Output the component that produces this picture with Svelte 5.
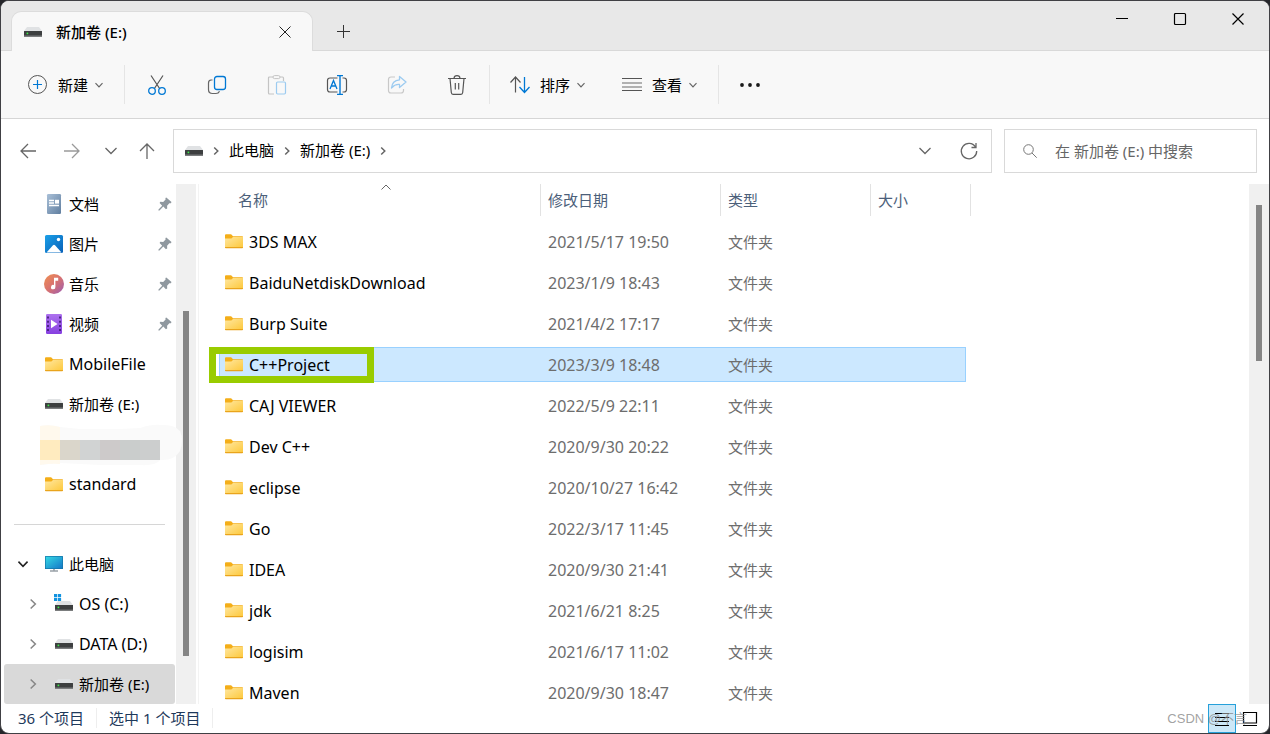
<script lang="ts">
  type Folder = { name: string; modified: string };
  type Place = { label: string; icon: string; level?: number; pinned?: boolean; open?: boolean; latin?: boolean };

  const folders: Folder[] = [
    { name: '3DS MAX', modified: '2021/5/17 19:50' },
    { name: 'BaiduNetdiskDownload', modified: '2023/1/9 18:43' },
    { name: 'Burp Suite', modified: '2021/4/2 17:17' },
    { name: 'C++Project', modified: '2023/3/9 18:48' },
    { name: 'CAJ VIEWER', modified: '2022/5/9 22:11' },
    { name: 'Dev C++', modified: '2020/9/30 20:22' },
    { name: 'eclipse', modified: '2020/10/27 16:42' },
    { name: 'Go', modified: '2022/3/17 11:45' },
    { name: 'IDEA', modified: '2020/9/30 21:41' },
    { name: 'jdk', modified: '2021/6/21 8:25' },
    { name: 'logisim', modified: '2021/6/17 11:02' },
    { name: 'Maven', modified: '2020/9/30 18:47' }
  ];

  const quickAccess: Place[] = [
    { label: '文档', icon: 'document', pinned: true },
    { label: '图片', icon: 'picture', pinned: true },
    { label: '音乐', icon: 'music', pinned: true },
    { label: '视频', icon: 'video', pinned: true },
    { label: 'MobileFile', icon: 'folder', latin: true },
    { label: '新加卷 (E:)', icon: 'drive' },
    { label: '', icon: 'hidden' },
    { label: 'standard', icon: 'folder', latin: true }
  ];

  const computer: Place[] = [
    { label: '此电脑', icon: 'computer', open: true },
    { label: 'OS (C:)', icon: 'system', level: 1, latin: true },
    { label: 'DATA (D:)', icon: 'drive', level: 1, latin: true },
    { label: '新加卷 (E:)', icon: 'drive', level: 1 }
  ];

  let selected = $state('C++Project');
  let current = $state(3);
  let query = $state('');
</script>

<svelte:head>
  <title>新加卷 (E:)</title>
</svelte:head>

{#snippet driveIcon()}
  <svg class="drive" width="18" height="10" viewBox="0 0 18 10" aria-hidden="true">
    <path d="M3 0h12l3 4H0z" fill="#e0e2e4" />
    <rect y="4" width="18" height="6" rx="0.5" fill="#7b7d7e" />
    <rect y="4" width="18" height="4.6" rx="0.5" fill="#3d3f40" />
    <rect x="2.6" y="5.6" width="1.6" height="1.6" fill="#3df04a" />
  </svg>
{/snippet}

{#snippet folderIcon()}
  <svg width="18" height="15" viewBox="0 0 18 15" aria-hidden="true">
    <path d="M0 1.2Q0 0.3 1 0.3h4.8q0.7 0 1.1 0.6L8 2.2h9.3q0.7 0 0.7 0.8v3H0z" fill="#f4ae19" />
    <path d="M0 4.6h6.4L8 3h10v10.2q0 0.8-0.8 0.8H0.8Q0 14 0 13.2z" fill="url(#folder-front)" />
    <path d="M0 13h18v0.3q0 0.9-0.8 0.9H0.8Q0 14.2 0 13.3z" fill="#e9a41c" />
  </svg>
{/snippet}

{#snippet chevron(dir: string)}
  <svg class="chevron {dir}" width="10" height="10" viewBox="0 0 10 10" aria-hidden="true">
    <path d="M1.5 3.2 5 6.8l3.5-3.6" />
  </svg>
{/snippet}

{#snippet placeIcon(icon: string)}
  {#if icon === 'folder'}
    {@render folderIcon()}
  {:else if icon === 'drive'}
    {@render driveIcon()}
  {:else if icon === 'system'}
    <svg width="18" height="20" viewBox="0 0 18 20" aria-hidden="true">
      <path d="M3 7h12l3 4H0z" fill="#e0e2e4" />
      <rect y="11" width="18" height="6" fill="#7b7d7e" />
      <rect y="11" width="18" height="4.6" fill="#3d3f40" />
      <rect x="2.6" y="12.6" width="1.6" height="1.6" fill="#3df04a" />
      <path d="M-1 0h3.200v3.200H-1zM2.900 0h3.200v3.200H2.900zM-1 3.900h3.200v3.200H-1zM2.900 3.900h3.200v3.200H2.900z" fill="#1293e0" />
    </svg>
  {:else if icon === 'document'}
    <svg width="18" height="20" viewBox="0 0 18 20" aria-hidden="true">
      <rect x="2" width="14" height="20" rx="1.2" fill="url(#doc-fill)" />
      <path d="M4 6.500h5M4 9h5M4 11.500h10" stroke="#fff" stroke-width="1.3" />
      <rect x="10" y="5.8" width="4" height="3.8" fill="#fff" />
    </svg>
  {:else if icon === 'picture'}
    <svg width="18" height="18" viewBox="0 0 18 18" aria-hidden="true">
      <rect width="18" height="18" rx="1.5" fill="url(#pic-fill)" />
      <path d="M1.500 17.500 8 10.300q1-1 2 0l6.500 7.200z" fill="#fff" />
      <circle cx="13.5" cy="4.5" r="1.7" fill="#fff" />
    </svg>
  {:else if icon === 'music'}
    <svg width="20" height="20" viewBox="0 0 20 20" aria-hidden="true">
      <circle cx="10" cy="10" r="10" fill="url(#music-fill)" />
      <path d="M10 3.800h4.200v3H11.400V13a2.200 2.200 0 1 1-1.400-1.900z" fill="#fff" />
    </svg>
  {:else if icon === 'video'}
    <svg width="18" height="20" viewBox="0 0 18 20" aria-hidden="true">
      <rect x="1" width="16" height="20" rx="1.2" fill="url(#video-fill)" />
      <path d="M3 2.500v16M15 2.500v16" stroke="#46207d" stroke-width="1.8" stroke-dasharray="2 2.2" />
      <path d="M6 5.800 12.500 10 6 14.200z" fill="#fff" />
    </svg>
  {:else if icon === 'computer'}
    <svg width="18" height="16" viewBox="0 0 18 16" aria-hidden="true">
      <rect width="18" height="13" rx="0.6" fill="#1474a8" />
      <rect x="0.7" y="0.7" width="16.6" height="11.6" fill="url(#screen-fill)" />
      <path d="M8 13h2v1.500H8z" fill="#a9b2b8" />
      <path d="M5 15h8" stroke="#66737c" stroke-width="1.2" />
    </svg>
  {/if}
{/snippet}

{#snippet place(item: Place, index: number)}
  <li>
    <button class="place" class:child={item.level} class:current={index === current} onclick={() => (current = index)}>
      {#if item.level || item.open}
        <span class="twisty" class:open={item.open}>{@render chevron(item.open ? 'down' : 'right')}</span>
      {/if}
      <span class="place-icon">{@render placeIcon(item.icon)}</span>
      <span class="place-label" class:latin={item.latin}>{item.label}</span>
      {#if item.pinned}
        <svg class="pin" width="14" height="14" viewBox="0 0 14 14" aria-hidden="true">
          <path d="M8.300 0.500 13.500 5l-0.600 1.200-1.600 0-2.200 2.600 0.100 2.600-1.300 0.800-2.600-2.600L1.500 13.400 0.400 13.500 0.500 12.400 4.200 8.700 1.600 6.100l0.700-1.300 2.900 0.100 2.400-2.300-0.200-1.500z" fill="#8f989f" />
        </svg>
      {/if}
    </button>
  </li>
{/snippet}

<svg class="defs" width="0" height="0" aria-hidden="true">
  <defs>
    <linearGradient id="folder-front" x1="0" y1="0" x2="1" y2="1"><stop stop-color="#ffe7a0" /><stop offset="1" stop-color="#fdc83a" /></linearGradient>
    <linearGradient id="doc-fill" x1="0" y1="0" x2="1" y2="1"><stop stop-color="#a9c0d8" /><stop offset="1" stop-color="#607e9f" /></linearGradient>
    <linearGradient id="pic-fill" x1="0" y1="0" x2="1" y2="1"><stop stop-color="#1ba0e8" /><stop offset="1" stop-color="#0860b8" /></linearGradient>
    <linearGradient id="music-fill" x1="0" y1="0" x2="1" y2="1"><stop stop-color="#f09050" /><stop offset="0.5" stop-color="#d87270" /><stop offset="1" stop-color="#9a5cb4" /></linearGradient>
    <linearGradient id="video-fill" x1="0" y1="0" x2="0" y2="1"><stop stop-color="#ad72ee" /><stop offset="1" stop-color="#8640e0" /></linearGradient>
    <linearGradient id="screen-fill" x1="0" y1="0" x2="1" y2="1"><stop stop-color="#35d8e4" /><stop offset="1" stop-color="#1478c8" /></linearGradient>
  </defs>
</svg>

<div class="window">
  <header class="titlebar">
    <div class="tab">
      {@render driveIcon()}
      <span class="tab-title">新加卷 (E:)</span>
      <button class="tab-close" aria-label="关闭标签页">
        <svg width="12" height="12" viewBox="0 0 12 12"><path d="m0.500 0.500 11 11m0-11-11 11" stroke="#222" /></svg>
      </button>
    </div>
    <button class="tab-new" aria-label="新标签页">
      <svg width="12" height="12" viewBox="0 0 12 12"><path d="M6.500 0v13M0 6.500h13" stroke="#333" /></svg>
    </button>
    <div class="window-buttons">
      <button aria-label="最小化"><svg width="12" height="12" viewBox="0 0 12 12"><path d="M0 5.500h12" stroke="#000" /></svg></button>
      <button aria-label="最大化"><svg width="12" height="12" viewBox="0 0 12 12"><rect x="0.5" y="0.5" width="11" height="11" rx="1" fill="none" stroke="#000" stroke-width="1.2" /></svg></button>
      <button aria-label="关闭"><svg width="12" height="12" viewBox="0 0 12 12"><path d="m0.500 0.500 11 11m0-11-11 11" stroke="#000" stroke-width="1.2" /></svg></button>
    </div>
  </header>

  <div class="toolbar">
    <button class="command">
      <svg width="20" height="20" viewBox="0 0 20 20" aria-hidden="true">
        <circle cx="9.5" cy="9.5" r="9" fill="none" stroke="#555" />
        <path d="M9.500 5v9M5 9.500h9" stroke="#0078d4" stroke-width="1.2" />
      </svg>
      新建{@render chevron('down')}
    </button>
    <span class="divider"></span>
    <button class="tool" aria-label="剪切">
      <svg width="20" height="20" viewBox="0 0 20 20">
        <path d="m4 0.500 8.600 13M16 0.500 7.400 13.500" stroke="#555" stroke-width="1.2" />
        <circle cx="5" cy="16" r="3.3" stroke="#0078d4" stroke-width="1.3" />
        <circle cx="15" cy="16" r="3.3" stroke="#0078d4" stroke-width="1.3" />
      </svg>
    </button>
    <button class="tool" aria-label="复制">
      <svg width="20" height="20" viewBox="0 0 20 20">
        <path d="M5.500 5H4Q1.500 5.200 1.500 8v6.500q0 4 4 4H9q2.500 0 3.500-2.200" stroke="#666" stroke-width="1.2" />
        <rect x="7.5" y="1.5" width="11" height="13" rx="2.5" stroke="#0078d4" stroke-width="1.3" />
      </svg>
    </button>
    <button class="tool" aria-label="粘贴">
      <svg width="20" height="20" viewBox="0 0 20 20">
        <path d="M6 2H2.500q-1 0-1 1v15q0 1 1 1H7M13 2h2.500q1 0 1 1v3" stroke="#c4c4c4" stroke-width="1.2" />
        <rect x="6" y="0.6" width="7" height="3" rx="1.5" stroke="#c4c4c4" />
        <rect x="9.5" y="7" width="9" height="12" rx="1.2" stroke="#9ccbf0" stroke-width="1.2" />
      </svg>
    </button>
    <button class="tool" aria-label="重命名">
      <svg width="22" height="20" viewBox="0 0 22 20">
        <path d="M11.500 3H4Q1.500 3 1.500 5.500v9Q1.500 17 4 17h7.500M16.500 3H18q2.500 0 2.500 2.500v9Q20.500 17 18 17h-1.500" stroke="#555" stroke-width="1.2" />
        <path d="M11 0.600h6M11 19.400h6M14 0.600v18.800" stroke="#0078d4" stroke-width="1.4" />
        <path d="M4 14 7.500 5.500 11 14M5.300 11h4.400" stroke="#0078d4" stroke-width="1.3" />
      </svg>
    </button>
    <button class="tool" aria-label="共享">
      <svg width="20" height="20" viewBox="0 0 20 20">
        <path d="M8 2H4Q1.500 2 1.500 4.500v11Q1.500 18 4 18h10q2.500 0 2.500-2.500V14" stroke="#c8c8c8" stroke-width="1.2" />
        <path d="M12.500 1.500 19 7l-6.500 5.500V9.500Q8 9 4.500 13 5 5.500 12.500 4.800z" stroke="#9ccbf0" stroke-width="1.3" stroke-linejoin="round" />
      </svg>
    </button>
    <button class="tool" aria-label="删除">
      <svg width="20" height="20" viewBox="0 0 20 20">
        <path d="M1 3.500h18M7 3.200Q7.200 0.700 10 0.700t3 2.500M3 3.500l1.300 14Q4.500 19.300 6 19.300h8q1.500 0 1.700-1.800L17 3.500M8.300 8v6.500M11.700 8v6.500" stroke="#555" stroke-width="1.2" />
      </svg>
    </button>
    <span class="divider"></span>
    <button class="command">
      <svg width="20" height="20" viewBox="0 0 20 20" aria-hidden="true" fill="none">
        <path d="M5.500 17.500V2.500M0.500 7.500l5-5.500 5 5.500" stroke="#555" stroke-width="1.2" />
        <path d="M14.500 2v15M9.500 12l5 5.500 5-5.500" stroke="#0078d4" stroke-width="1.3" />
      </svg>
      排序{@render chevron('down')}
    </button>
    <button class="command">
      <svg width="20" height="20" viewBox="0 0 20 20" aria-hidden="true">
        <path d="M0 3.500h20M0 15.500h20" stroke="#555" />
        <path d="M0 8h20M0 12h20" stroke="#999" stroke-width="1.6" />
      </svg>
      查看{@render chevron('down')}
    </button>
    <span class="divider"></span>
    <button class="more" aria-label="更多">
      <svg width="20" height="4" viewBox="0 0 20 4"><circle cx="2" cy="2" r="1.9" /><circle cx="10" cy="2" r="1.9" /><circle cx="18" cy="2" r="1.9" /></svg>
    </button>
  </div>

  <nav class="navigation">
    <button class="nav-button" aria-label="后退">
      <svg width="16" height="16" viewBox="0 0 16 16"><path d="M16 8H1M8 1 1 8l7 7" /></svg>
    </button>
    <button class="nav-button disabled" aria-label="前进">
      <svg width="16" height="16" viewBox="0 0 16 16"><path d="M0 8h15M8 1l7 7-7 7" /></svg>
    </button>
    <button class="nav-button narrow" aria-label="最近位置">
      <svg width="12" height="8" viewBox="0 0 12 8"><path d="m0.500 1 5.500 5.500L11.500 1" /></svg>
    </button>
    <button class="nav-button up" aria-label="向上">
      <svg width="16" height="16" viewBox="0 0 16 16"><path d="M8 16V1M1 8l7-7 7 7" /></svg>
    </button>
    <div class="address">
      {@render driveIcon()}
      <span class="crumb-arrow">{@render chevron('right')}</span>
      <a href="#computer">此电脑</a>
      <span class="crumb-arrow">{@render chevron('right')}</span>
      <a href="#drive">新加卷 (E:)</a>
      <span class="crumb-arrow">{@render chevron('right')}</span>
      <button class="nav-button history" aria-label="以前的位置">
        <svg width="12" height="8" viewBox="0 0 12 8"><path d="m0.500 1 5.500 5.500L11.500 1" /></svg>
      </button>
      <button class="nav-button" aria-label="刷新">
        <svg width="18" height="18" viewBox="0 0 18 18"><path d="M15.500 5A7.700 7.700 0 1 0 16.700 9M16 1v4.500h-4.500" /></svg>
      </button>
    </div>
    <label class="search">
      <svg width="14" height="14" viewBox="0 0 14 14" aria-hidden="true"><circle cx="5.5" cy="5.5" r="4.8" /><path d="m9 9 4.700 4.700" /></svg>
      <input type="text" aria-label="搜索" placeholder="在 新加卷 (E:) 中搜索" bind:value={query} />
    </label>
  </nav>

  <div class="content">
    <aside class="sidebar">
      <ul>
        {#each quickAccess as item, i (i)}
          {#if item.icon === 'hidden'}
            <li class="smudge">
              <svg width="144" height="40" viewBox="0 0 144 40" aria-hidden="true">
                <path d="M0 2q10-2 20 1l20 2h40l20-1Q112 0 122 1q12-1 18 6 4 9 0 20-6 10-20 9-4 6-20 5H60L20 39 0 41z" fill="#fafafa" />
                <path d="M0 2q10-2 20 1v37q-10-1-20 1z" fill="#fff9ed" />
                <path d="M0 16h20v20H0z" fill="#ffebbf" />
                <path d="M20 16h20v20H20z" fill="#dad6cb" />
                <path d="M40 16h20v20H40z" fill="#d1d3d3" />
                <path d="M60 16h20v20H60z" fill="#cdcaca" />
                <path d="M80 16h20v20H80z" fill="#cacdcc" />
                <path d="M100 16h20v20h-20z" fill="#cccece" />
              </svg>
            </li>
          {:else}
            {@render place(item, i - 8)}
          {/if}
        {/each}
      </ul>
      <hr />
      <ul>
        {#each computer as item, i (i)}
          {@render place(item, i)}
        {/each}
      </ul>
    </aside>
    <div class="scrollbar side"><span class="thumb"></span></div>

    <main class="files">
      <table>
        <thead>
          <tr>
            <th class="col-name" aria-sort="ascending">
              <div>名称<svg class="sort-mark" width="10" height="6" viewBox="0 0 10 6"><path d="M0.500 5.500 5 1l4.500 4.500" /></svg></div>
            </th>
            <th class="col-date"><div>修改日期</div></th>
            <th class="col-type"><div>类型</div></th>
            <th class="col-size"><div>大小</div></th>
          </tr>
        </thead>
        <tbody>
          {#each folders as folder (folder.name)}
            <tr class:selected={folder.name === selected} onclick={() => (selected = folder.name)}>
              <td>
                <div class="name">{@render folderIcon()}<span>{folder.name}</span></div>
                {#if folder.name === 'C++Project'}<span class="marker"></span>{/if}
              </td>
              <td class="date"><div>{folder.modified}</div></td>
              <td><div>文件夹</div></td>
              <td><div></div></td>
            </tr>
          {/each}
        </tbody>
      </table>
    </main>
    <div class="scrollbar main"><span class="thumb"></span></div>
  </div>

  <footer class="statusbar">
    <span>36 个项目</span>
    <span>选中 1 个项目</span>
    <div class="views">
      <button class="view active" aria-label="详细信息">
        <svg width="14" height="14" viewBox="0 0 14 14"><path d="M0 1.500h14M0 5.500h14M0 9.500h14M0 13.500h14" /></svg>
      </button>
      <button class="view" aria-label="大缩略图">
        <svg width="14" height="14" viewBox="0 0 14 14"><path d="M0.500 0.500h13v10.500H0.500zM0 13.500h14" /></svg>
      </button>
      <span class="watermark">CSDN @不言</span>
    </div>
  </footer>
</div>

<style>
  :global(body) { background: #25262a; }
  .window {
    box-sizing: border-box;
    display: flex;
    flex-direction: column;
    height: 100vh;
    border: 1px solid #404044;
    border-radius: 9px;
    overflow: hidden;
    background: #fff;
    color: #000;
    font: 15px/20px "Noto Sans", "Noto Sans CJK SC", sans-serif;
  }
  .defs { position: absolute; }
  button {
    padding: 0;
    border: 0;
    background: none;
    color: inherit;
    font: inherit;
  }
  svg { display: block; flex: none; overflow: visible; }
  ul { margin: 0; padding: 0; list-style: none; }

  .titlebar {
    display: flex;
    flex: none;
    height: 49px;
    border-bottom: 1px solid #d9d9d9;
    background: #e8e8e8;
  }
  .tab {
    position: relative;
    box-sizing: border-box;
    display: flex;
    align-items: center;
    width: 302px;
    height: 40px;
    margin: 10px 0 -1px 10px;
    padding-left: 12px;
    border: 1px solid #dcdcdc;
    border-bottom: 0;
    border-radius: 10px 10px 0 0;
    background: #f8f8f8;
  }
  .tab-title { margin-left: 14px; font-weight: 500; }
  .tab-close { display: grid; place-items: center; width: 32px; height: 32px; margin: 0 11px 0 auto; }
  .tab-new { display: grid; place-items: center; width: 32px; height: 32px; margin: 14px 0 0 14px; }
  .window-buttons { display: flex; margin-left: auto; padding-right: 2px; }
  .window-buttons button { display: grid; place-items: center; width: 58px; height: 36px; }

  .toolbar {
    display: flex;
    flex: none;
    align-items: center;
    height: 67px;
    padding-left: 9px;
    border-bottom: 1px solid #d6d6d6;
    background: #f8f8f8;
  }
  .command { display: flex; align-items: center; gap: 10px; height: 40px; padding: 0 18px; }
  .command .chevron, .command :global(.chevron) { margin-left: -4px; }
  .tool { display: grid; place-items: center; width: 60px; height: 40px; fill: none; }
  .tool svg { fill: none; }
  .divider { width: 1px; height: 39px; margin: 0 2px; background: #e5e5e5; }
  .more { padding: 18px 19px; fill: #1a1a1a; }
  .chevron { fill: none; stroke: #666; stroke-width: 1.2; }
  .chevron.right { transform: rotate(-90deg); }

  .navigation { display: flex; flex: none; padding: 10px 12px 11px 5px; }
  .nav-button { display: grid; flex: none; place-items: center; width: 44px; height: 44px; fill: none; stroke: #666; stroke-width: 1.3; }
  .nav-button.disabled { stroke: #9a9a9a; }
  .nav-button.narrow { width: 34px; }
  .nav-button.up { width: 38px; }
  .nav-button.history { margin-left: auto; }
  .address, .search { box-sizing: border-box; display: flex; align-items: center; height: 44px; border: 1px solid #d9d9d9; }
  .address { flex: 1; margin: 0 12px 0 7px; padding-left: 11px; }
  .address a { padding-bottom: 2px; color: inherit; text-decoration: none; }
  .crumb-arrow { display: grid; place-items: center; width: 26px; }
  .crumb-arrow :global(.chevron) { stroke-width: 1.5; }
  .search { width: 253px; padding-left: 18px; }
  .search svg { fill: none; stroke: #777; }
  .search input {
    flex: 1;
    min-width: 0;
    margin-left: 18px;
    padding: 0;
    border: 0;
    outline: 0;
    background: none;
    font: inherit;
  }
  .search input::placeholder { color: #666; opacity: 1; }

  .content { display: flex; flex: 1; min-height: 0; }
  .sidebar { flex: none; width: 175px; }
  .place { position: relative; display: flex; align-items: center; width: 100%; height: 40px; padding: 0 4px 0 43px; text-align: left; }
  .place.child { padding-left: 53px; }
  .place.current { width: 171px; margin-left: 3px; padding-left: 50px; border-radius: 3px; background: #d9d9d9; }
  .place-icon { display: grid; place-items: center; width: 20px; }
  .place-label { margin-left: 5px; white-space: nowrap; }
  .place-label.latin { font-size: 16px; }
  .pin { margin-left: auto; }
  .twisty { position: absolute; right: calc(100% - 37px); }
  .twisty :global(.chevron) { stroke: #888; stroke-width: 1.2; }
  .twisty :global(.chevron.right) { transform: rotate(-90deg) scale(1.3); }
  .twisty.open { right: calc(100% - 27px); }
  .twisty.open :global(.chevron) { stroke: #222; transform: scale(1.3); }
  .current .twisty { right: calc(100% - 34px); }
  .smudge { position: relative; z-index: 1; height: 40px; padding-left: 39px; }
  hr { height: 1px; margin: 20px 11px 19px 13px; border: 0; background: #d6d6d6; }

  .scrollbar { flex: none; width: 20px; background: #f0f0f0; }
  .scrollbar .thumb { display: block; width: 6px; margin: 0 7px; background: #858585; }
  .scrollbar.side { border-right: 2px solid #fff; box-shadow: 1px 0 #f3f3f3; }
  .scrollbar.side .thumb { height: 66.4%; margin-top: 127px; }
  .scrollbar.main .thumb { height: 30%; margin-top: 21px; }

  .files { flex: 1; min-width: 0; padding-left: 21px; overflow: hidden; }
  table { width: 752px; border-collapse: collapse; table-layout: fixed; }
  th, td { position: relative; padding: 0; text-align: left; font-weight: 400; }
  .col-name { width: 322px; }
  .col-date { width: 180px; }
  .col-type { width: 150px; }
  .col-size { width: 100px; }
  th { height: 37px; color: #4c607a; vertical-align: top; }
  th div { box-sizing: border-box; height: 32px; padding: 6px 7px; border-right: 1px solid #e2e2e2; }
  .col-name div { padding-left: 19px; }
  .sort-mark { position: absolute; top: 0; left: 162px; fill: none; stroke: #666; }
  td { height: 41px; color: #6d6d6d; }
  td div { box-sizing: border-box; display: flex; align-items: center; height: 35px; padding-left: 7px; border: solid transparent; border-width: 1px 0; }
  td:first-child div { padding-left: 5px; border-left-width: 1px; }
  td:last-child div { margin-right: 5px; border-right-width: 1px; }
  .name { gap: 6px; color: #000; font-size: 16px; }
  .date { font-size: 16px; }
  .selected td div { border-color: #99d1ff; background: #cce8ff; }
  .marker {
    position: absolute;
    top: 3px;
    left: -10px;
    box-sizing: border-box;
    width: 165px;
    height: 36px;
    border: 7px solid #99cc00;
  }

  .statusbar { display: flex; flex: none; align-items: center; height: 29px; padding-left: 17px; color: #1e395b; }
  .statusbar > span { margin: -2px 12px 0 0; padding-right: 12px; border-right: 1px solid #eee; }
  .views { position: relative; display: flex; align-self: stretch; margin: 0 5px 0 auto; }
  .view { display: grid; place-items: center; width: 28px; box-sizing: border-box; }
  .view svg { fill: none; stroke: #000; stroke-width: 1.2; }
  .view.active { border: 1px solid #26a0da; background: #cce8f8; }
  .watermark {
    position: absolute;
    right: 17px;
    bottom: 4px;
    color: #8a8a8acc;
    font: 13px/20px "Liberation Sans", "Noto Sans CJK SC", sans-serif;
    white-space: nowrap;
    pointer-events: none;
  }
</style>
